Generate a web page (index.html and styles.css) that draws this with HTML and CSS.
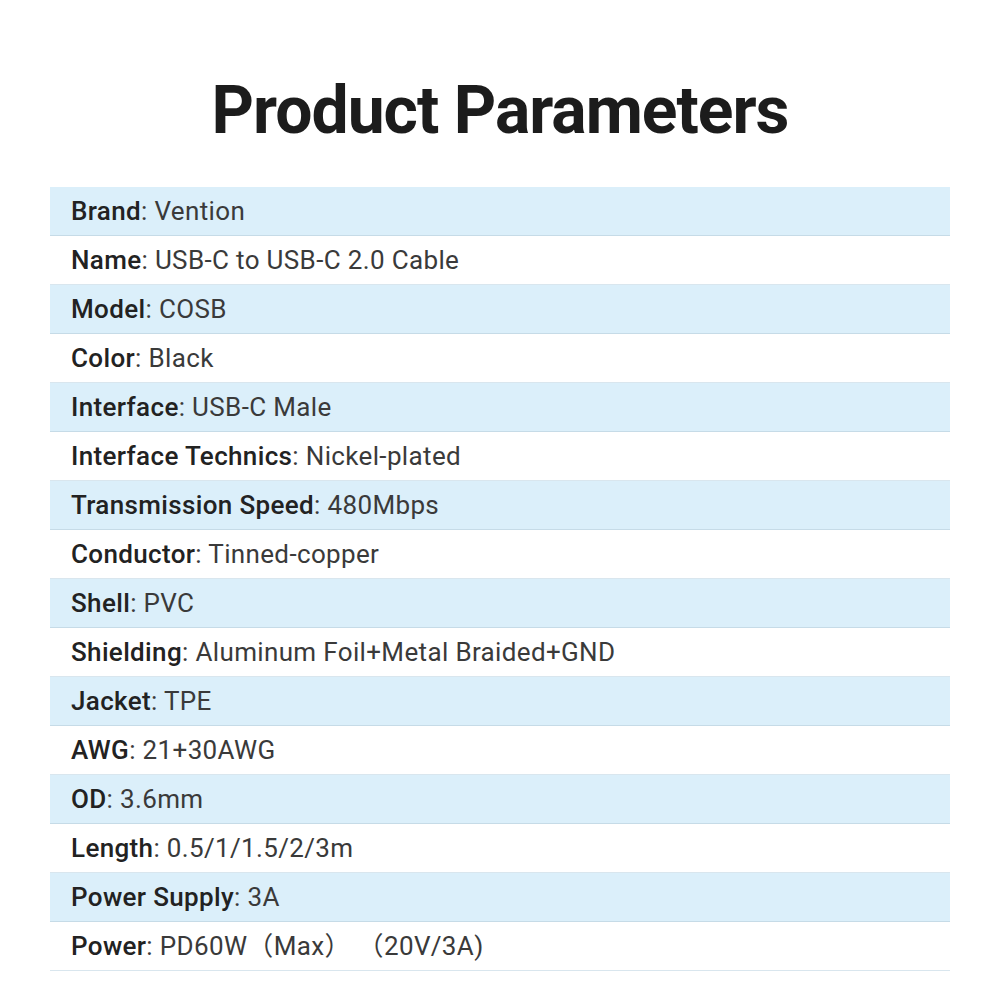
FILE: index.html
```html
<!DOCTYPE html>
<html>
<head>
<meta charset="utf-8">
<link rel="stylesheet" href="styles.css">
</head>
<body>
<div class="page">
  <h1 class="title">Product Parameters</h1>
  <div class="table">
    <div class="row blue"><span class="label">Brand</span>: Vention</div>
    <div class="row"><span class="label">Name</span>: USB-C to USB-C 2.0 Cable</div>
    <div class="row blue"><span class="label">Model</span>: COSB</div>
    <div class="row"><span class="label">Color</span>: Black</div>
    <div class="row blue"><span class="label">Interface</span>: USB-C Male</div>
    <div class="row"><span class="label">Interface Technics</span>: Nickel-plated</div>
    <div class="row blue"><span class="label">Transmission Speed</span>: 480Mbps</div>
    <div class="row"><span class="label">Conductor</span>: Tinned-copper</div>
    <div class="row blue"><span class="label">Shell</span>: PVC</div>
    <div class="row"><span class="label">Shielding</span>: Aluminum Foil+Metal Braided+GND</div>
    <div class="row blue"><span class="label">Jacket</span>: TPE</div>
    <div class="row"><span class="label">AWG</span>: 21+30AWG</div>
    <div class="row blue"><span class="label">OD</span>: 3.6mm</div>
    <div class="row"><span class="label">Length</span>: 0.5/1/1.5/2/3m</div>
    <div class="row blue"><span class="label">Power Supply</span>: 3A</div>
    <div class="row"><span class="label">Power</span>: PD60W（Max） （20V/3A)</div>
  </div>
</div>
</body>
</html>
```
FILE: styles.css
```css
html, body {
  margin: 0;
  padding: 0;
  background: #ffffff;
}
.page {
  width: 1000px;
  height: 1000px;
  display: flex;
  flex-direction: column;
  align-items: center;
  font-family: Roboto, "Noto Sans CJK SC", sans-serif;
}
.title {
  margin: 70px 0 35px 0;
  font-size: 66px;
  line-height: 82px;
  font-weight: 700;
  letter-spacing: -1px;
  color: #1c1c1c;
}
.table {
  width: 900px;
  display: flex;
  flex-direction: column;
}
.row {
  display: block;
  height: 48px;
  line-height: 48px;
  overflow: hidden;
  border-bottom: 1px solid #d9e6ee;
  padding-left: 21px;
  font-size: 26px;
  letter-spacing: 0.35px;
  color: #3a3a3a;
  white-space: pre;
}
.row.blue {
  background: #dbeffa;
  border-bottom-color: #c6dbe7;
}
.label {
  font-weight: 500;
  color: #222222;
}
```
